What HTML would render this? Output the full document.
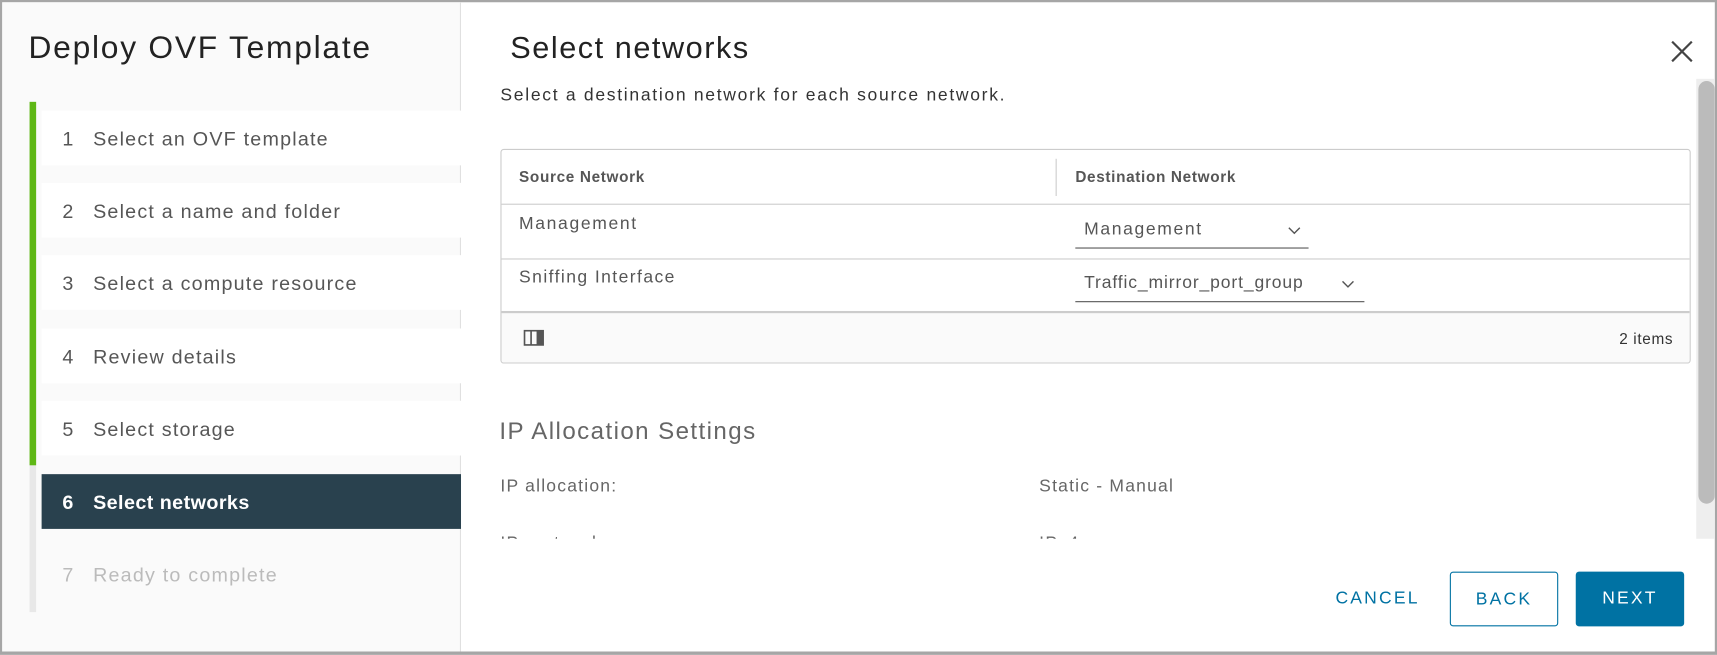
<!DOCTYPE html>
<html><head><meta charset="utf-8"><style>
*{box-sizing:border-box;margin:0;padding:0}
html,body{width:1717px;height:655px;overflow:hidden;background:#fff}
#w{position:absolute;left:0;top:0;width:1568px;height:598px;transform:scale(1.09503);transform-origin:0 0;font-family:"Liberation Sans",sans-serif;color:#565656;border:2px solid #a6a6a6;border-bottom-width:3px;overflow:hidden;letter-spacing:1.2px}
.a{position:absolute;white-space:nowrap}
#left{position:absolute;left:0;top:0;width:419px;height:598px;background:#fafafa;border-right:1px solid #e0e0e0}
.step{position:absolute;left:36px;width:383px;height:50px;background:#fff;font-size:18px;line-height:52px;padding-left:19px;color:#565656;letter-spacing:1.1px}
.step b{font-weight:normal;display:inline-block;width:28px}
.btn{position:absolute;top:520px;height:50px;font-size:16px;letter-spacing:2px;line-height:50px;text-align:center;border-radius:3px}
</style></head><body><div id="w">
<div id="left">
<div class="a" style="left:24px;top:26px;font-size:29px;color:#222;letter-spacing:1.6px">Deploy OVF Template</div>
<div class="a" style="left:25px;top:91px;width:6px;height:332px;background:#5eb715"></div>
<div class="a" style="left:25px;top:423px;width:6px;height:134px;background:#e8e8e8"></div>
<div class="step" style="top:99px"><b>1</b>Select an OVF template</div>
<div class="step" style="top:165px"><b>2</b>Select a name and folder</div>
<div class="step" style="top:231px"><b>3</b>Select a compute resource</div>
<div class="step" style="top:298px"><b>4</b>Review details</div>
<div class="step" style="top:364px"><b>5</b>Select storage</div>
<div class="step" style="top:431px;background:#29414e;color:#fff;font-weight:bold;letter-spacing:0.4px"><b style="font-weight:bold">6</b>Select networks</div>
<div class="step" style="top:497px;background:transparent;color:#bbb"><b>7</b>Ready to complete</div>
</div>
<div class="a" style="left:464px;top:26px;font-size:28px;color:#222;letter-spacing:1.4px">Select networks</div>
<svg class="a" style="left:1523px;top:34px" width="22" height="22" viewBox="0 0 22 22"><path d="M2 2L20 20M20 2L2 20" stroke="#444" stroke-width="2"/></svg>
<div class="a" style="left:455px;top:77px;font-size:16px;color:#333;letter-spacing:1.55px">Select a destination network for each source network.</div>
<div class="a" style="left:455px;top:134px;width:1087px;height:196px;border:1px solid #ccc;border-radius:3px;overflow:hidden">
 <div class="a" style="left:0;top:0;width:100%;height:50px;border-bottom:1px solid #ccc"></div>
 <div class="a" style="left:16px;top:16px;font-size:14px;font-weight:bold;color:#565656;letter-spacing:0.6px">Source Network</div>
 <div class="a" style="left:506px;top:8px;width:1px;height:34px;background:#ccc"></div>
 <div class="a" style="left:524px;top:16px;font-size:14px;font-weight:bold;color:#565656;letter-spacing:0.6px">Destination Network</div>
 <div class="a" style="left:0;top:99px;width:100%;height:1px;background:#ccc"></div>
 <div class="a" style="left:16px;top:59px;font-size:16px;letter-spacing:1.5px">Management</div>
 <div class="a" style="left:16px;top:108px;font-size:16px;letter-spacing:1.3px">Sniffing Interface</div>
 <div class="a" style="left:524px;top:89px;width:213px;height:1px;background:#555"></div>
 <div class="a" style="left:532px;top:64px;font-size:16px;letter-spacing:1.5px">Management</div>
 <svg class="a" style="left:718px;top:70px" width="12" height="8"><path d="M1 1L6 6L11 1" stroke="#555" stroke-width="1.3" fill="none"/></svg>
 <div class="a" style="left:524px;top:138px;width:264px;height:1px;background:#555"></div>
 <div class="a" style="left:532px;top:113px;font-size:16px;letter-spacing:0.8px">Traffic_mirror_port_group</div>
 <svg class="a" style="left:767px;top:119px" width="12" height="8"><path d="M1 1L6 6L11 1" stroke="#555" stroke-width="1.3" fill="none"/></svg>
 <div class="a" style="left:0;top:147px;width:100%;height:49px;background:#fafafa;border-top:2px solid #ccc"></div>
 <svg class="a" style="left:20px;top:164px" width="19" height="15"><rect x="1" y="1" width="17" height="13" fill="none" stroke="#555" stroke-width="1.5"/><line x1="7" y1="1" x2="7" y2="14" stroke="#555" stroke-width="1.5"/><rect x="12" y="1" width="6" height="13" fill="#555"/></svg>
 <div class="a" style="right:15px;top:164px;font-size:14px;color:#333;letter-spacing:0.6px">2 items</div>
</div>
<div class="a" style="left:454px;top:379px;font-size:22px;color:#666;letter-spacing:1.3px">IP Allocation Settings</div>
<div class="a" style="left:455px;top:434px;font-size:16px;color:#666;letter-spacing:1.1px">IP allocation:</div>
<div class="a" style="left:947px;top:434px;font-size:16px;color:#666;letter-spacing:1.1px">Static - Manual</div>
<div class="a" style="left:455px;top:485px;height:5px;overflow:hidden;font-size:16px;color:#666;line-height:20px;letter-spacing:1.1px">IP protocol:</div>
<div class="a" style="left:947px;top:485px;height:5px;overflow:hidden;font-size:16px;color:#666;line-height:20px">IPv4</div>
<div class="a" style="left:1547px;top:70px;width:19px;height:420px;background:#eee"></div>
<div class="a" style="left:1549px;top:72px;width:15px;height:386px;background:#bbb;border-radius:8px"></div>
<div class="btn" style="left:1206px;width:100px;color:#0072a3">CANCEL</div>
<div class="btn" style="left:1322px;width:99px;border:1px solid #0072a3;color:#0072a3">BACK</div>
<div class="btn" style="left:1437px;width:99px;background:#0072a3;color:#fff">NEXT</div>
</div></body></html>
